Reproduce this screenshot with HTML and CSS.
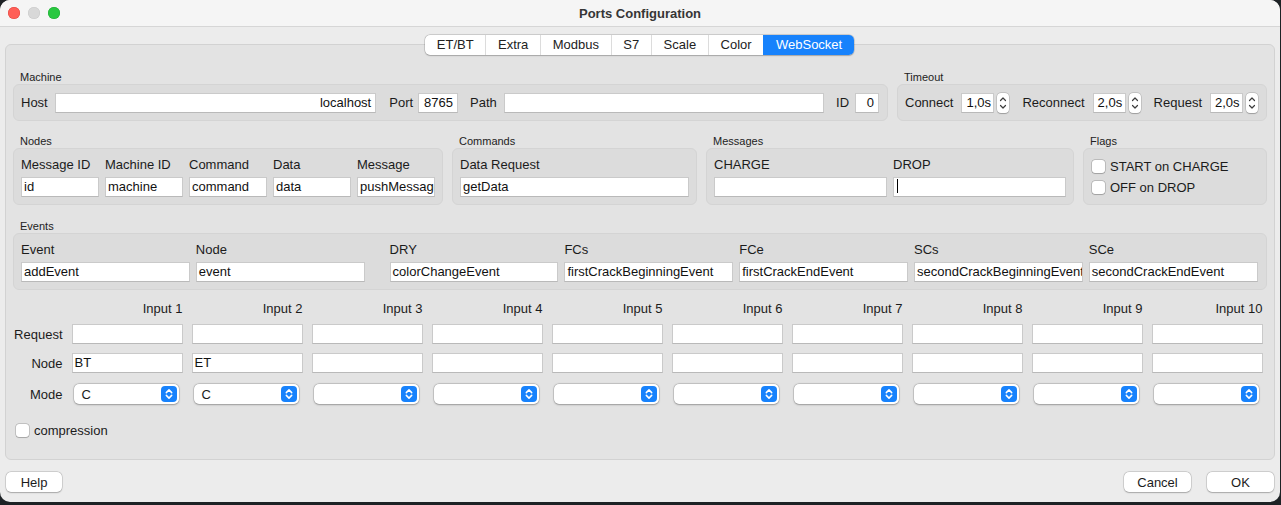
FILE: index.html
```html
<!DOCTYPE html>
<html>
<head>
<meta charset="utf-8">
<title>Ports Configuration</title>
<link rel="stylesheet" href="styles.css">
</head>
<body>
<div class="window">
  <header class="titlebar">
    <div class="lights"><span class="light red"></span><span class="light gray"></span><span class="light green"></span></div>
    <div class="title">Ports Configuration</div>
    <div></div>
  </header>
  <main class="content">
    <nav class="tabs">
      <span class="tab">ET/BT</span><span class="tab">Extra</span><span class="tab">Modbus</span><span class="tab">S7</span><span class="tab">Scale</span><span class="tab">Color</span><span class="tab active">WebSocket</span>
    </nav>
    <div class="pane">
      <div class="row r1">
        <section class="group machine">
          <div class="gtitle">Machine</div>
          <div class="gbox hbox">
            <span class="lbl host">Host</span><div class="field right w-host">localhost</div>
            <span class="lbl port">Port</span><div class="field right w-port">8765</div>
            <span class="lbl sp">Path</span><div class="field w-path"></div>
            <span class="lbl sp id">ID</span><div class="field right w-id">0</div>
          </div>
        </section>
        <section class="group timeout">
          <div class="gtitle">Timeout</div>
          <div class="gbox hbox">
            <span class="lbl tl">Connect</span><div class="field spin">1,0s</div><span class="stepper"><svg width="12" height="20" viewBox="0 0 12 20"><path d="M3.5 7.5L6 5L8.5 7.5M3.5 12.5L6 15L8.5 12.5" fill="none" stroke="#3c3c3c" stroke-width="1.2" stroke-linecap="round" stroke-linejoin="round"/></svg></span>
            <span class="lbl tl sp">Reconnect</span><div class="field spin">2,0s</div><span class="stepper"><svg width="12" height="20" viewBox="0 0 12 20"><path d="M3.5 7.5L6 5L8.5 7.5M3.5 12.5L6 15L8.5 12.5" fill="none" stroke="#3c3c3c" stroke-width="1.2" stroke-linecap="round" stroke-linejoin="round"/></svg></span>
            <span class="lbl tl sp">Request</span><div class="field spin">2,0s</div><span class="stepper"><svg width="12" height="20" viewBox="0 0 12 20"><path d="M3.5 7.5L6 5L8.5 7.5M3.5 12.5L6 15L8.5 12.5" fill="none" stroke="#3c3c3c" stroke-width="1.2" stroke-linecap="round" stroke-linejoin="round"/></svg></span>
          </div>
        </section>
      </div>

      <div class="row r2">
        <section class="group nodes">
          <div class="gtitle">Nodes</div>
          <div class="gbox cols">
            <div class="col c78"><span class="clbl">Message ID</span><div class="field">id</div></div>
            <div class="col c78"><span class="clbl">Machine ID</span><div class="field">machine</div></div>
            <div class="col c78"><span class="clbl">Command</span><div class="field">command</div></div>
            <div class="col c78"><span class="clbl">Data</span><div class="field">data</div></div>
            <div class="col c78"><span class="clbl">Message</span><div class="field">pushMessage</div></div>
          </div>
        </section>
        <section class="group commands">
          <div class="gtitle">Commands</div>
          <div class="gbox cols">
            <div class="col grow"><span class="clbl">Data Request</span><div class="field">getData</div></div>
          </div>
        </section>
        <section class="group messages">
          <div class="gtitle">Messages</div>
          <div class="gbox cols">
            <div class="col grow"><span class="clbl">CHARGE</span><div class="field"></div></div>
            <div class="col grow"><span class="clbl">DROP</span><div class="field"><span class="caret"></span></div></div>
          </div>
        </section>
        <section class="group flags">
          <div class="gtitle">Flags</div>
          <div class="gbox checks">
            <label class="check"><span class="box"></span>START on CHARGE</label>
            <label class="check"><span class="box"></span>OFF on DROP</label>
          </div>
        </section>
      </div>

      <div class="row r3">
        <section class="group events">
          <div class="gtitle">Events</div>
          <div class="gbox cols">
            <div class="col c169"><span class="clbl">Event</span><div class="field">addEvent</div></div>
            <div class="col c169"><span class="clbl">Node</span><div class="field">event</div></div>
            <div class="col c169 wide"><span class="clbl">DRY</span><div class="field">colorChangeEvent</div></div>
            <div class="col c169"><span class="clbl">FCs</span><div class="field">firstCrackBeginningEvent</div></div>
            <div class="col c169"><span class="clbl">FCe</span><div class="field">firstCrackEndEvent</div></div>
            <div class="col c169"><span class="clbl">SCs</span><div class="field">secondCrackBeginningEvent</div></div>
            <div class="col c169"><span class="clbl">SCe</span><div class="field">secondCrackEndEvent</div></div>
          </div>
        </section>
      </div>

      <div class="table">
        <div class="trow thead">
          <span></span>
          <span class="th">Input 1</span><span class="th">Input 2</span><span class="th">Input 3</span><span class="th">Input 4</span><span class="th">Input 5</span><span class="th">Input 6</span><span class="th">Input 7</span><span class="th">Input 8</span><span class="th">Input 9</span><span class="th">Input 10</span>
        </div>
        <div class="trow treq">
          <span class="rl">Request</span>
          <div class="field"></div><div class="field"></div><div class="field"></div><div class="field"></div><div class="field"></div><div class="field"></div><div class="field"></div><div class="field"></div><div class="field"></div><div class="field"></div>
        </div>
        <div class="trow tnode">
          <span class="rl">Node</span>
          <div class="field">BT</div><div class="field">ET</div><div class="field"></div><div class="field"></div><div class="field"></div><div class="field"></div><div class="field"></div><div class="field"></div><div class="field"></div><div class="field"></div>
        </div>
        <div class="trow tmode">
          <span class="rl">Mode</span>
          <div class="popup"><span class="pv">C</span><span class="popbtn"><svg width="16" height="16" viewBox="0 0 16 16"><path d="M5.3 6.6L8 3.9L10.7 6.6M5.3 9.4L8 12.1L10.7 9.4" fill="none" stroke="#fff" stroke-width="1.5" stroke-linecap="round" stroke-linejoin="round"/></svg></span></div>
          <div class="popup"><span class="pv">C</span><span class="popbtn"><svg width="16" height="16" viewBox="0 0 16 16"><path d="M5.3 6.6L8 3.9L10.7 6.6M5.3 9.4L8 12.1L10.7 9.4" fill="none" stroke="#fff" stroke-width="1.5" stroke-linecap="round" stroke-linejoin="round"/></svg></span></div>
          <div class="popup"><span class="pv"></span><span class="popbtn"><svg width="16" height="16" viewBox="0 0 16 16"><path d="M5.3 6.6L8 3.9L10.7 6.6M5.3 9.4L8 12.1L10.7 9.4" fill="none" stroke="#fff" stroke-width="1.5" stroke-linecap="round" stroke-linejoin="round"/></svg></span></div>
          <div class="popup"><span class="pv"></span><span class="popbtn"><svg width="16" height="16" viewBox="0 0 16 16"><path d="M5.3 6.6L8 3.9L10.7 6.6M5.3 9.4L8 12.1L10.7 9.4" fill="none" stroke="#fff" stroke-width="1.5" stroke-linecap="round" stroke-linejoin="round"/></svg></span></div>
          <div class="popup"><span class="pv"></span><span class="popbtn"><svg width="16" height="16" viewBox="0 0 16 16"><path d="M5.3 6.6L8 3.9L10.7 6.6M5.3 9.4L8 12.1L10.7 9.4" fill="none" stroke="#fff" stroke-width="1.5" stroke-linecap="round" stroke-linejoin="round"/></svg></span></div>
          <div class="popup"><span class="pv"></span><span class="popbtn"><svg width="16" height="16" viewBox="0 0 16 16"><path d="M5.3 6.6L8 3.9L10.7 6.6M5.3 9.4L8 12.1L10.7 9.4" fill="none" stroke="#fff" stroke-width="1.5" stroke-linecap="round" stroke-linejoin="round"/></svg></span></div>
          <div class="popup"><span class="pv"></span><span class="popbtn"><svg width="16" height="16" viewBox="0 0 16 16"><path d="M5.3 6.6L8 3.9L10.7 6.6M5.3 9.4L8 12.1L10.7 9.4" fill="none" stroke="#fff" stroke-width="1.5" stroke-linecap="round" stroke-linejoin="round"/></svg></span></div>
          <div class="popup"><span class="pv"></span><span class="popbtn"><svg width="16" height="16" viewBox="0 0 16 16"><path d="M5.3 6.6L8 3.9L10.7 6.6M5.3 9.4L8 12.1L10.7 9.4" fill="none" stroke="#fff" stroke-width="1.5" stroke-linecap="round" stroke-linejoin="round"/></svg></span></div>
          <div class="popup"><span class="pv"></span><span class="popbtn"><svg width="16" height="16" viewBox="0 0 16 16"><path d="M5.3 6.6L8 3.9L10.7 6.6M5.3 9.4L8 12.1L10.7 9.4" fill="none" stroke="#fff" stroke-width="1.5" stroke-linecap="round" stroke-linejoin="round"/></svg></span></div>
          <div class="popup"><span class="pv"></span><span class="popbtn"><svg width="16" height="16" viewBox="0 0 16 16"><path d="M5.3 6.6L8 3.9L10.7 6.6M5.3 9.4L8 12.1L10.7 9.4" fill="none" stroke="#fff" stroke-width="1.5" stroke-linecap="round" stroke-linejoin="round"/></svg></span></div>
        </div>
        <label class="check compression"><span class="box"></span>compression</label>
      </div>
    </div>
    <footer class="buttons">
      <button class="btn help">Help</button>
      <div class="spacer"></div>
      <button class="btn">Cancel</button>
      <button class="btn ok">OK</button>
    </footer>
  </main>
</div>
</body>
</html>
```

FILE: styles.css
```css
* { box-sizing: border-box; }
html, body { margin: 0; padding: 0; background: #1d2225; }
body {
  width: 1281px; height: 505px; overflow: hidden;
  font-family: "Liberation Sans", Arial, sans-serif;
  font-size: 13px; color: #1b1b1b;
}
.window {
  width: 1280px; height: 502px;
  background: #ececec;
  border-radius: 10px;
  overflow: hidden;
  display: flex; flex-direction: column;
}
.titlebar {
  flex: none; height: 27px;
  background: #f5f5f5;
  border-bottom: 1px solid #d6d6d6;
  display: grid; grid-template-columns: 1fr auto 1fr; align-items: center;
}
.lights { display: flex; gap: 8px; padding-left: 8px; }
.light { width: 12px; height: 12px; border-radius: 50%; }
.red { background: #ff5f57; box-shadow: inset 0 0 0 0.5px #e0443e; }
.gray { background: #d8d8d8; box-shadow: inset 0 0 0 0.5px #c8c8c8; }
.green { background: #28c840; box-shadow: inset 0 0 0 0.5px #1daa31; }
.title { font-weight: bold; font-size: 13px; color: #363636; }

.content { flex: 1; display: flex; flex-direction: column; padding: 8px 5px 0 5px; }

.tabs {
  align-self: center; display: flex; height: 20px;
  background: #fff; border-radius: 5px;
  box-shadow: 0 0 0 0.5px rgba(0,0,0,0.22), 0 0.5px 1.5px rgba(0,0,0,0.18);
  position: relative; z-index: 1;
  margin-left: -1px;
}
.tab {
  padding: 0 11.7px; line-height: 20px; font-size: 13px; color: #222;
  border-left: 1px solid #dcdcdc;
}
.tab:first-child { border-left: none; }
.tab.active { background: #1782fc; color: #fff; border-left-color: #1782fc; border-radius: 0 5px 5px 0; }

.pane {
  height: 416px; margin-top: -11px;
  background: #e3e3e3;
  border: 1px solid #d2d2d2;
  border-radius: 6px;
  padding: 26px 7px 0 7px;
  display: flex; flex-direction: column;
}
.row { display: flex; gap: 9px; margin-bottom: 14px; }
.row.r2 { margin-bottom: 15px; }
.group { display: flex; flex-direction: column; }
.gtitle { font-size: 11px; line-height: 13px; height: 13px; padding-left: 7px; color: #222; }
.gbox {
  background: #dcdcdc;
  border: 1px solid #d4d4d4;
  border-radius: 6px;
}
.machine { width: 875px; }
.timeout { flex: 1; }
.hbox { height: 37px; display: flex; align-items: center; padding: 0 8px 0 7px; }
.lbl { margin-right: 7px; white-space: nowrap; }
.lbl.host { width: 27px; }
.lbl.port { margin-left: 13px; margin-right: 5px; }
.lbl.sp { margin-left: 12px; }
.lbl.id { margin-left: 12px; margin-right: 6px; }
.lbl.tl { margin-right: 8px; }
.timeout .lbl.sp { margin-left: 13px; }

.field {
  height: 20px; background: #fff;
  border: 1px solid #cacaca; border-bottom-color: #b9b9b9;
  line-height: 18px; padding: 0 2px;
  white-space: nowrap; overflow: hidden;
  color: #111;
}
.field.right { text-align: right; padding-right: 4px; }
.w-host { width: 322px; }
.w-port { width: 40px; }
.w-path { width: 321px; }
.w-id { width: 24px; }
.spin { width: 33px; padding-left: 4px; }
.stepper {
  width: 12px; height: 20px; margin-left: 3px;
  background: #fff; border-radius: 4px;
  box-shadow: 0 0 0 0.5px rgba(0,0,0,0.2), 0 0.5px 1px rgba(0,0,0,0.2);
  display: flex;
}

.cols { display: flex; gap: 6px; padding: 8px 7px 7px 7px; }
.col { display: flex; flex-direction: column; gap: 4px; }
.clbl { line-height: 16px; height: 16px; white-space: nowrap; }
.c78 { width: 78px; }
.c169 { width: 168.8px; }
.col.wide { margin-left: 19px; }
.grow { flex: 1; }
.nodes { width: 430px; }
.commands { width: 245px; }
.messages { width: 368px; }
.flags { flex: 1; }
.events { flex: 1; }
.caret { display: inline-block; width: 1px; height: 14px; background: #000; vertical-align: -2px; margin-left: 1px; }

.checks { height: 57px; padding: 7px 0 0 8px; display: flex; flex-direction: column; }
.check { display: flex; align-items: center; height: 21px; white-space: nowrap; }
.box {
  width: 13px; height: 13px; margin-right: 5px;
  background: #fff; border-radius: 3px;
  box-shadow: 0 0 0 0.5px rgba(0,0,0,0.28), 0 0.5px 1px rgba(0,0,0,0.15);
}

.table { display: flex; flex-direction: column; }
.trow { display: grid; grid-template-columns: 49.5px repeat(10, 111px); column-gap: 9px; align-items: center; }
.thead { height: 16px; line-height: 16px; margin-top: -3px; }
.th { text-align: right; white-space: nowrap; }
.rl { text-align: right; white-space: nowrap; }
.treq { margin-top: 7px; }
.tnode { margin-top: 9px; }
.tmode { margin-top: 11px; }
.popup {
  width: 105px; height: 20px; margin-left: 2px;
  background: #fff; border-radius: 5px;
  box-shadow: 0 0 0 0.5px rgba(0,0,0,0.18), 0 0.5px 2px rgba(0,0,0,0.25);
  display: flex; align-items: center; justify-content: space-between;
  padding: 0 2px 0 8px;
}
.popbtn { width: 16px; height: 16px; border-radius: 4px; background: #1782fc; display: flex; }
.compression { margin-top: 19px; margin-left: 3px; height: 14px; }

.buttons { display: flex; align-items: center; margin-top: 12px; padding: 0 1px 0 1px; }
.spacer { flex: 1; }
.btn {
  font-family: "Liberation Sans", Arial, sans-serif; font-size: 13px; color: #1b1b1b;
  height: 20px; padding: 0; border: none; background: #fff; border-radius: 5px;
  box-shadow: 0 0 0 0.5px rgba(0,0,0,0.18), 0 0.5px 1.5px rgba(0,0,0,0.22);
  width: 67px;
}
.btn.help { width: 56px; }
.btn.ok { margin-left: 16px; }
```
